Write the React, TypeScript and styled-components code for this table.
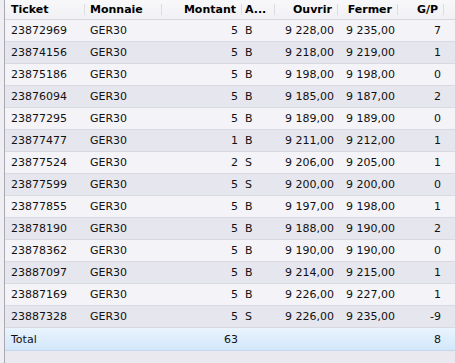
import styled, { createGlobalStyle } from 'styled-components';

const GlobalStyle = createGlobalStyle`
  html, body {
    margin: 0;
    padding: 0;
    background: #ececf1;
  }
  body {
    font-family: "DejaVu Sans", Verdana, sans-serif;
    font-size: 11px;
    color: #111111;
  }
`;

const COLS = '80px 77px 80px 33px 63px 60px 46px 1fr';

const Frame = styled.div`
  width: 455px;
  height: 363px;
  padding-left: 4px;
  box-sizing: border-box;
  background: #efeff3;
  overflow: hidden;
`;

const Grid = styled.div`
  height: 100%;
  border-left: 1px solid #a9a9b3;
  background: #e9e9ef;
  display: flex;
  flex-direction: column;
`;

const HeaderRow = styled.div`
  display: grid;
  grid-template-columns: ${COLS};
  height: 20px;
  background: linear-gradient(#f8f8fa, #f1f1f5);
  border-bottom: 1px solid #d6d6de;
  box-sizing: border-box;
  font-weight: bold;
  color: #000000;
`;

const HeadCell = styled.div<{ $align?: 'left' | 'right'; $pad?: number }>`
  display: flex;
  align-items: center;
  justify-content: ${p => (p.$align === 'right' ? 'flex-end' : 'flex-start')};
  padding: ${p =>
    p.$align === 'right' ? '0 6px 0 3px' : `0 3px 0 ${p.$pad ?? 6}px`};
  position: relative;
  white-space: nowrap;
  overflow: hidden;

  &::after {
    content: '';
    position: absolute;
    right: 0;
    top: 4px;
    bottom: 4px;
    width: 1px;
    background: #dcdce3;
  }

  &:last-child::after {
    display: none;
  }
`;

const Row = styled.div<{ $alt?: boolean }>`
  display: grid;
  grid-template-columns: ${COLS};
  height: 22px;
  box-sizing: border-box;
  border-bottom: 1px solid #d9d9e1;
  background: ${p => (p.$alt ? '#e6e6ee' : '#f4f4f8')};
`;

const TotalRow = styled(Row)`
  height: 23px;
  background: linear-gradient(#e9f4fe, #d3e7fb);
  border-bottom: 1px solid #c3d7ec;
`;

const Cell = styled.div<{ $align?: 'left' | 'right'; $pad?: number }>`
  display: flex;
  align-items: center;
  justify-content: ${p => (p.$align === 'right' ? 'flex-end' : 'flex-start')};
  padding: ${p =>
    p.$align === 'right' ? `0 ${p.$pad ?? 4}px 0 0` : `0 0 0 ${p.$pad ?? 6}px`};
  white-space: nowrap;
  overflow: hidden;
`;

const rows = [
  ['23872969', 5, 'B', '9 228,00', '9 235,00', 7],
  ['23874156', 5, 'B', '9 218,00', '9 219,00', 1],
  ['23875186', 5, 'B', '9 198,00', '9 198,00', 0],
  ['23876094', 5, 'B', '9 185,00', '9 187,00', 2],
  ['23877295', 5, 'B', '9 189,00', '9 189,00', 0],
  ['23877477', 1, 'B', '9 211,00', '9 212,00', 1],
  ['23877524', 2, 'S', '9 206,00', '9 205,00', 1],
  ['23877599', 5, 'S', '9 200,00', '9 200,00', 0],
  ['23877855', 5, 'B', '9 197,00', '9 198,00', 1],
  ['23878190', 5, 'B', '9 188,00', '9 190,00', 2],
  ['23878362', 5, 'B', '9 190,00', '9 190,00', 0],
  ['23887097', 5, 'B', '9 214,00', '9 215,00', 1],
  ['23887169', 5, 'B', '9 226,00', '9 227,00', 1],
  ['23887328', 5, 'S', '9 226,00', '9 235,00', -9],
] as const;

export default function App() {
  const totalQty = rows.reduce((s, r) => s + r[1], 0);
  const totalPl = rows.reduce((s, r) => s + r[5], 0);

  return (
    <>
      <GlobalStyle />
      <Frame>
        <Grid>
          <HeaderRow>
            <HeadCell>Ticket</HeadCell>
            <HeadCell $pad={5}>Monnaie</HeadCell>
            <HeadCell $align="right">Montant</HeadCell>
            <HeadCell $pad={3}>A...</HeadCell>
            <HeadCell $align="right">Ouvrir</HeadCell>
            <HeadCell $align="right">Fermer</HeadCell>
            <HeadCell $align="right">G/P</HeadCell>
            <HeadCell />
          </HeaderRow>

          {rows.map((r, i) => (
            <Row key={r[0]} $alt={i % 2 === 1}>
              <Cell>{r[0]}</Cell>
              <Cell $pad={5}>GER30</Cell>
              <Cell $align="right">{r[1]}</Cell>
              <Cell $pad={3}>{r[2]}</Cell>
              <Cell $align="right">{r[3]}</Cell>
              <Cell $align="right" $pad={3}>{r[4]}</Cell>
              <Cell $align="right" $pad={3}>{r[5]}</Cell>
              <Cell />
            </Row>
          ))}

          <TotalRow>
            <Cell>Total</Cell>
            <Cell />
            <Cell $align="right">{totalQty}</Cell>
            <Cell />
            <Cell />
            <Cell />
            <Cell $align="right" $pad={3}>{totalPl}</Cell>
            <Cell />
          </TotalRow>
        </Grid>
      </Frame>
    </>
  );
}
